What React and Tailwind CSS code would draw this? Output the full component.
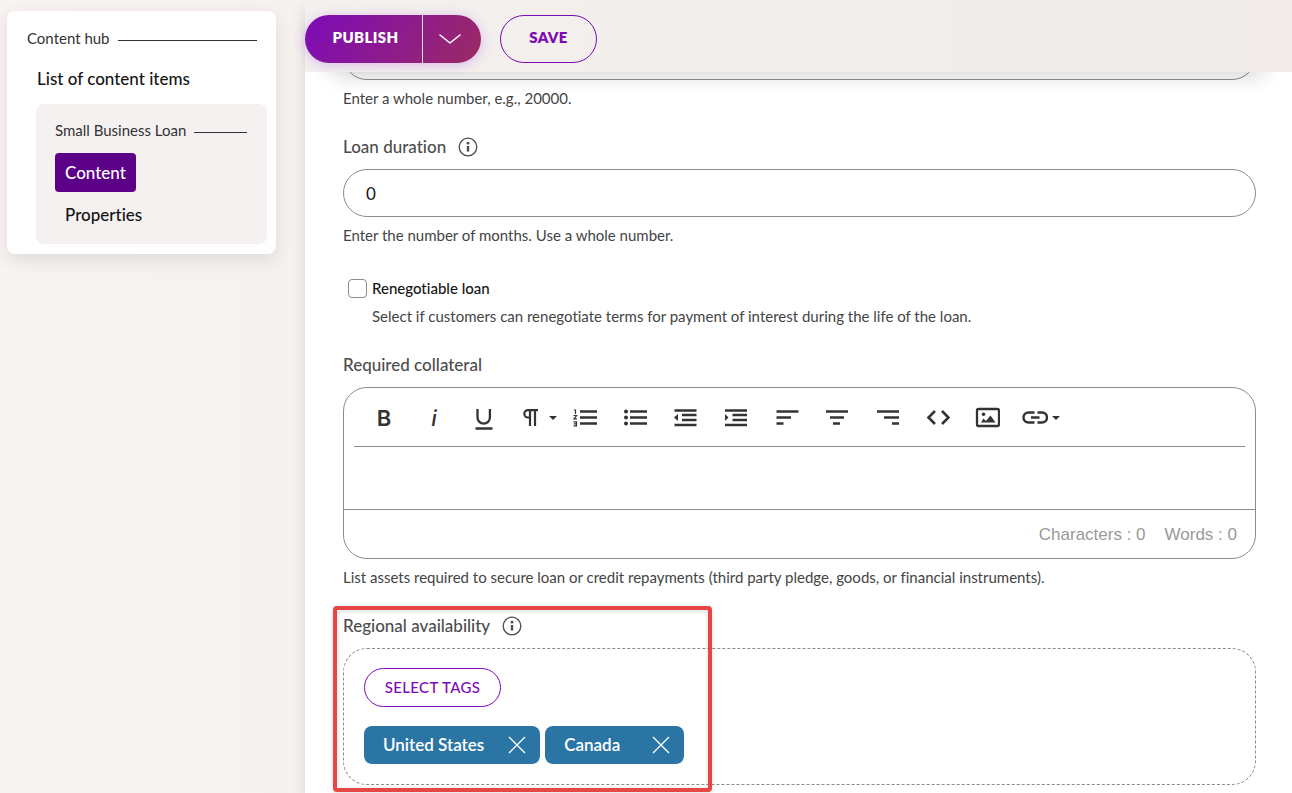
import React, { useState } from "react";

function Help({ id, children }) {
  return (
    <p id={id} className="mt-2 text-[15px] leading-5 text-[#444]">
      {children}
    </p>
  );
}

function InfoIcon() {
  return (
    <svg viewBox="0 0 20 20" className="h-5 w-5" fill="none" aria-hidden="true">
      <circle cx="10" cy="10" r="8.8" stroke="#4d4d4d" strokeWidth="1.3" />
      <circle cx="10" cy="6.2" r="1.4" fill="#4d4d4d" />
      <path d="M10 9v5.5" stroke="#4d4d4d" strokeWidth="2.4" />
    </svg>
  );
}

function Tool({ label, wide, children }) {
  return (
    <button
      type="button"
      aria-label={label}
      className={
        wide
          ? "flex h-[38px] w-[50px] items-center justify-center gap-1 pl-2 text-[#333]"
          : "flex h-[38px] w-[50px] items-center justify-center text-[#333]"
      }
    >
      {children}
    </button>
  );
}

function Glyph({ children }) {
  return (
    <svg viewBox="-13 -13 26 26" className="h-[26px] w-[26px] shrink-0" fill="none" stroke="currentColor" strokeWidth="2.3" aria-hidden="true">
      {children}
    </svg>
  );
}

function Caret() {
  return (
    <svg viewBox="0 0 8 4" className="h-1 w-2 shrink-0" aria-hidden="true">
      <path d="M0 0h8L4 4z" fill="currentColor" />
    </svg>
  );
}

function Tag({ name, onRemove }) {
  return (
    <li className="flex h-[38px] min-w-[139px] items-center justify-between gap-6 rounded-lg bg-[#2b75a4] pr-[14px] pl-[19px] text-[17px] font-semibold text-white">
      {name}
      <button type="button" aria-label={"Remove " + name} onClick={onRemove}>
        <svg viewBox="0 0 18 18" className="h-[18px] w-[18px]" fill="none" stroke="white" strokeWidth="1.3" aria-hidden="true">
          <path d="M1 1l16 16M17 1L1 17" />
        </svg>
      </button>
    </li>
  );
}

function Sidebar() {
  return (
    <aside className="w-[305px] shrink-0 pt-[11px] pr-[29px] pl-[7px]">
      <nav className="rounded-lg bg-white pt-[17px] pr-[9px] pb-[10px] pl-5 shadow-[0_6px_18px_rgba(60,40,40,0.12)]">
        <div className="flex items-center gap-2 pr-[10px] text-[15px] leading-5 text-[#333]">
          Content hub
          <span className="mt-1 h-px flex-1 bg-[#333]" />
        </div>
        <a href="#list" className="mt-[19px] ml-[10px] block text-[17px] leading-6 font-medium text-[#151515]">
          List of content items
        </a>
        <div className="mt-[13px] ml-[9px] rounded-lg bg-[#f4f1f0] px-[19px] pt-4 pb-[17px]">
          <div className="flex items-center gap-2 pr-px text-[15px] leading-5 text-[#333]">
            Small Business Loan
            <span className="mt-1 h-px flex-1 bg-[#333]" />
          </div>
          <a href="#content" aria-current="page" className="mt-[13px] block w-fit rounded bg-[#5c0087] px-[10px] py-[7px] text-[17px] leading-[25px] font-medium text-white">
            Content
          </a>
          <a href="#properties" className="mt-[11px] block px-[10px] text-[17px] leading-6 font-medium text-[#151515]">
            Properties
          </a>
        </div>
      </nav>
    </aside>
  );
}

function ActionBar() {
  return (
    <header className="relative z-10 flex h-[72px] items-start gap-[19px] bg-linear-to-r from-[#f4f0ee] to-[#f0ebe9] pt-[15px] shadow-[0_30px_22px_-30px_rgba(0,0,0,0.3)]">
      <div className="flex h-12 overflow-hidden rounded-full bg-linear-[125deg] from-[#7d0bb8] to-[#9c2a63] text-white shadow-[0_2px_12px_rgba(150,60,230,0.3)]">
        <button type="button" className="w-[117px] pb-1 pl-1 text-[15px] font-extrabold tracking-wide">
          PUBLISH
        </button>
        <button type="button" aria-label="More publishing options" className="flex w-[59px] items-center justify-center border-l border-[#e6dbe8] pr-1">
          <svg viewBox="0 0 22 10" className="h-[10px] w-[22px]" fill="none" stroke="white" strokeWidth="1.6" strokeLinecap="round" strokeLinejoin="round" aria-hidden="true">
            <path d="M1 1l10 8 10-8" />
          </svg>
        </button>
      </div>
      <button type="button" className="h-12 w-[97px] rounded-full border border-[#7d09b5] pb-1 text-[15px] font-extrabold tracking-wide text-[#7d09b5]">
        SAVE
      </button>
    </header>
  );
}

function Toolbar() {
  return (
    <div role="toolbar" aria-label="Formatting" className="mx-[10px] flex h-[59px] gap-px border-b border-[#8c8c8c] pt-[11px] pl-[5px]">
      <div className="flex">
        <Tool label="Bold"><span className="font-['Inter'] text-[22px] leading-6 font-semibold">B</span></Tool>
        <Tool label="Italic"><span className="font-['Inter'] text-[22px] leading-6 font-medium italic">i</span></Tool>
        <Tool label="Underline">
          <Glyph><path d="M-6.5-9v8.5a6.2 6.2 0 0 0 12.4 0V-9M-8.5 10.5h17" /></Glyph>
        </Tool>
        <Tool label="Paragraph format" wide>
          <Glyph><path d="M6-7.9H-4a3.7 3.7 0 0 0 0 7.4H-2M-2-8.5V8M3-8.5V8" strokeWidth="2.2" /></Glyph>
          <Caret />
        </Tool>
      </div>
      <div className="flex">
        <Tool label="Ordered list">
          <Glyph>
            <path d="M-5-6.5h17M-5-.5h17M-5 5.5h17" />
            <path d="M-11-8h1.5v4M-11.5-2.5h3L-11 .8h3M-11.5 3.8h3v4h-3M-11 5.8h2.5" strokeWidth="1.2" />
          </Glyph>
        </Tool>
        <Tool label="Unordered list">
          <Glyph>
            <path d="M-5-6.5h17M-5-.5h17M-5 5.5h17" />
            <g fill="currentColor" stroke="none"><circle cx="-9" cy="-6.5" r="2" /><circle cx="-9" cy="-.5" r="2" /><circle cx="-9" cy="5.5" r="2" /></g>
          </Glyph>
        </Tool>
        <Tool label="Decrease indent">
          <Glyph>
            <path d="M-10.5-7.5h22M-3-3h14.5M-3 2h14.5M-10.5 7h22" />
            <path d="M-7-4v7l-4-3.5z" fill="currentColor" stroke="none" />
          </Glyph>
        </Tool>
        <Tool label="Increase indent">
          <Glyph>
            <path d="M-10-7.5h22M-2.5-3h14.5M-2.5 2h14.5M-10 7h22" />
            <path d="M-10-4v7l3.5-3.5z" fill="currentColor" stroke="none" />
          </Glyph>
        </Tool>
      </div>
      <div className="flex">
        <Tool label="Align left"><Glyph><path d="M-9.5-6.5h22M-9.5-.5H5M-9.5 5.5h7" /></Glyph></Tool>
        <Tool label="Align center"><Glyph><path d="M-10-6.5h22M-6-.5h14M-3 5.5h7" /></Glyph></Tool>
        <Tool label="Align right"><Glyph><path d="M-9-6.5h22M-2-.5h15M6 5.5h7" /></Glyph></Tool>
      </div>
      <div className="flex">
        <Tool label="Code view"><Glyph><path d="M-2-7L-8.5-.5-2 6M5-7l6.5 6.5L5 6" strokeWidth="2.6" /></Glyph></Tool>
        <Tool label="Insert image">
          <Glyph>
            <rect x="-10" y="-9" width="22" height="17" rx="1.5" />
            <circle cx="-3.5" cy="-3.8" r="1.8" fill="currentColor" stroke="none" />
            <path d="M-6 4.5L-3.5 .5l2.5 2.5L3.5-2.5l5 7z" fill="currentColor" stroke="none" />
          </Glyph>
        </Tool>
        <Tool label="Insert link" wide>
          <Glyph><path d="M-.5-5.5h-6a5 5 0 0 0 0 10h6M2.5-5.5h4.5a5 5 0 0 1 0 10H2.5M-4-.5h8.5" strokeWidth="2.5" /></Glyph>
          <Caret />
        </Tool>
      </div>
    </div>
  );
}

export default function App() {
  const [tags, setTags] = useState(["United States", "Canada"]);
  return (
    <div className="flex min-h-screen bg-linear-to-r from-[#f8f4f1] to-[#f0ebe9] font-['Lato',sans-serif] [font-variant-ligatures:none]">
      <Sidebar />
      <main className="min-w-0 flex-1 bg-white shadow-[0_8px_14px_rgba(60,40,40,0.14)]">
        <ActionBar />
        <form className="-mt-10 flex flex-col gap-[27px] pr-9 pb-2 pl-[38px]" onSubmit={(e) => e.preventDefault()}>
          <div>
            <input aria-label="Loan amount" aria-describedby="amount-help" className="block h-12 w-full rounded-full border border-[#8c8c8c] px-[22px]" />
            <Help id="amount-help">Enter a whole number, e.g., 20000.</Help>
          </div>
          <div>
            <div className="flex items-center gap-3 text-[17px] leading-6 font-medium text-[#4d4d4d]">
              <label htmlFor="duration">Loan duration</label>
              <InfoIcon />
            </div>
            <input id="duration" defaultValue="0" aria-describedby="duration-help" className="mt-[10px] block h-12 w-full rounded-full border border-[#8c8c8c] px-[22px] text-[17px] text-[#151515]" />
            <Help id="duration-help">Enter the number of months. Use a whole number.</Help>
          </div>
          <div className="mt-[6px] pl-[5px]">
            <label className="flex items-center gap-[5px] text-[15px] leading-5 font-medium text-[#151515]">
              <input type="checkbox" aria-describedby="renegotiable-help" className="h-[19px] w-[19px] appearance-none rounded border border-[#8c8c8c] bg-white checked:bg-[#7d09b5]" />
              Renegotiable loan
            </label>
            <div className="pl-6">
              <Help id="renegotiable-help">Select if customers can renegotiate terms for payment of interest during the life of the loan.</Help>
            </div>
          </div>
          <div>
            <label htmlFor="collateral" className="block text-[17px] leading-6 font-medium text-[#4d4d4d]">Required collateral</label>
            <div className="mt-[10px] overflow-hidden rounded-3xl border border-[#8c8c8c]">
              <Toolbar />
              <textarea id="collateral" className="block h-[62px] w-full resize-none px-5 py-3 outline-none" />
              <div className="flex h-[49px] items-center justify-end gap-[19px] border-t border-[#8c8c8c] pt-px pr-[18px] font-['Liberation_Sans',sans-serif] text-[17px] text-[#999]">
                <span>Characters : 0</span>
                <span>Words : 0</span>
              </div>
            </div>
            <Help>List assets required to secure loan or credit repayments (third party pledge, goods, or financial instruments).</Help>
          </div>
          <section className="relative">
            <div className="flex items-center gap-3 text-[17px] leading-6 font-medium text-[#4d4d4d]">
              <h2>Regional availability</h2>
              <InfoIcon />
            </div>
            <div className="mt-[10px] rounded-3xl border border-dashed border-[#8c8c8c] px-5 pt-[19px] pb-5">
              <button type="button" className="h-[39px] w-[137px] rounded-full border border-[#7d09b5] pb-px text-[15px] font-medium tracking-wide text-[#7d09b5]">
                SELECT TAGS
              </button>
              <ul className="mt-[19px] flex gap-[5px]">
                {tags.map((t) => (
                  <Tag key={t} name={t} onRemove={() => setTags(tags.filter((x) => x !== t))} />
                ))}
              </ul>
            </div>
            <div className="pointer-events-none absolute -top-2 -bottom-[7px] -left-[10px] w-[379px] rounded border-4 border-[#e84545] drop-shadow-sm" />
          </section>
        </form>
      </main>
    </div>
  );
}
